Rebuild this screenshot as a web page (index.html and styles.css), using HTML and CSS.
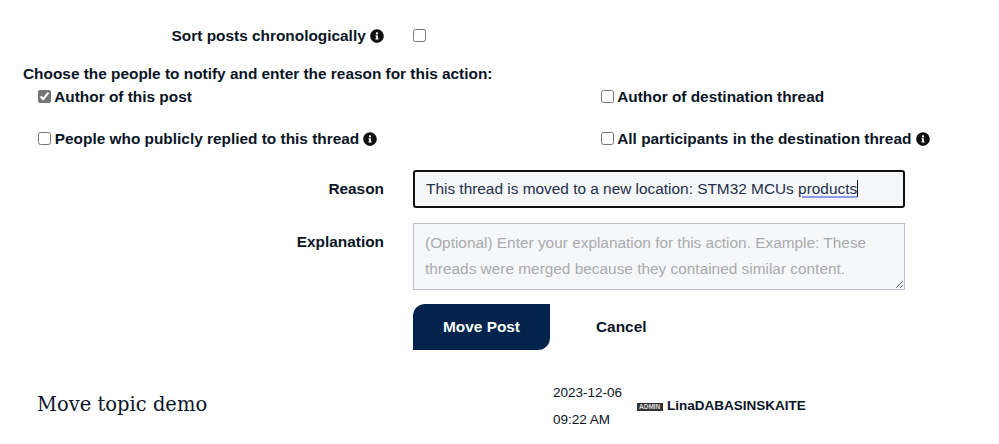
FILE: index.html
```html
<!DOCTYPE html>
<html lang="en">
<head>
  <meta charset="UTF-8">
  <title>Move Post</title>
  <link rel="stylesheet" href="styles.css">
</head>
<body>
  <form class="move-form">
    <div class="form-row sort-row">
      <label class="row-label" for="sort">Sort posts chronologically
        <svg class="info" viewBox="0 0 512 512"><path d="M256 8C119 8 8 119 8 256s111 248 248 248 248-111 248-248S393 8 256 8zm0 110c23 0 42 19 42 42s-19 42-42 42-42-19-42-42 19-42 42-42zm56 254c0 7-5 12-12 12h-88c-7 0-12-5-12-12v-24c0-7 5-12 12-12h12v-64h-12c-7 0-12-5-12-12v-24c0-7 5-12 12-12h64c7 0 12 5 12 12v100h12c7 0 12 5 12 12v24z"/></svg>
      </label>
      <div class="row-field"><input type="checkbox" id="sort"></div>
    </div>

    <p class="notify-title">Choose the people to notify and enter the reason for this action:</p>
    <div class="notify-grid">
      <label class="notify-item"><input type="checkbox" checked> Author of this post</label>
      <label class="notify-item"><input type="checkbox"> Author of destination thread</label>
      <label class="notify-item"><input type="checkbox"> People who publicly replied to this thread
        <svg class="info" viewBox="0 0 512 512"><path d="M256 8C119 8 8 119 8 256s111 248 248 248 248-111 248-248S393 8 256 8zm0 110c23 0 42 19 42 42s-19 42-42 42-42-19-42-42 19-42 42-42zm56 254c0 7-5 12-12 12h-88c-7 0-12-5-12-12v-24c0-7 5-12 12-12h12v-64h-12c-7 0-12-5-12-12v-24c0-7 5-12 12-12h64c7 0 12 5 12 12v100h12c7 0 12 5 12 12v24z"/></svg>
      </label>
      <label class="notify-item"><input type="checkbox"> All participants in the destination thread
        <svg class="info" viewBox="0 0 512 512"><path d="M256 8C119 8 8 119 8 256s111 248 248 248 248-111 248-248S393 8 256 8zm0 110c23 0 42 19 42 42s-19 42-42 42-42-19-42-42 19-42 42-42zm56 254c0 7-5 12-12 12h-88c-7 0-12-5-12-12v-24c0-7 5-12 12-12h12v-64h-12c-7 0-12-5-12-12v-24c0-7 5-12 12-12h64c7 0 12 5 12 12v100h12c7 0 12 5 12 12v24z"/></svg>
      </label>
    </div>

    <div class="form-row reason-row">
      <div class="row-label">Reason</div>
      <div class="row-field">
        <div class="reason-input">This thread is moved to a new location: STM32 MCUs <span class="misspelt">products</span></div>
      </div>
    </div>

    <div class="form-row explain-row">
      <label class="row-label" for="explanation">Explanation</label>
      <div class="row-field">
        <textarea id="explanation" class="explain-input" placeholder="(Optional) Enter your explanation for this action. Example: These threads were merged because they contained similar content."></textarea>
      </div>
    </div>

    <div class="form-row button-row">
      <div class="row-label"></div>
      <div class="row-field buttons">
        <button type="button" class="btn-primary">Move Post</button>
        <button type="button" class="btn-cancel">Cancel</button>
      </div>
    </div>
  </form>

  <div class="post-row">
    <h2 class="post-title">Move topic demo</h2>
    <div class="post-date">
      <div>2023-12-06</div>
      <div>09:22 AM</div>
    </div>
    <div class="post-author"><span class="admin-badge">ADMIN</span> LinaDABASINSKAITE</div>
  </div>
</body>
</html>
```

FILE: styles.css
```css
body {
  margin: 0;
  height: 444px;
  overflow: hidden;
  background: #fff;
  color: #0a1526;
  font-family: "Liberation Sans", Arial, sans-serif;
  font-size: 15.4px;
}

.move-form {
  padding-top: 26px;
}

.form-row {
  display: flex;
}

.row-label {
  width: 384px;
  flex: none;
  text-align: right;
  font-weight: bold;
  line-height: 20px;
}

.row-field {
  margin-left: 29px;
  flex: none;
}

.sort-row input {
  display: block;
  margin: 3px 0 0;
}

.info {
  width: 14px;
  height: 14px;
  vertical-align: -2px;
  fill: #111;
}

.notify-title {
  margin: 19px 0 0 23px;
  font-weight: bold;
  line-height: 18px;
}

.notify-grid {
  display: grid;
  grid-template-columns: 563px auto;
  margin: 4px 0 0 38px;
  row-gap: 22px;
}

.notify-item {
  font-weight: bold;
  line-height: 20px;
}

.notify-item input {
  margin: 0 -0.5px 0 0;
  vertical-align: -1px;
  accent-color: #767676;
}

.reason-row {
  margin-top: 21px;
}

.reason-row .row-label {
  line-height: 38px;
}

.reason-input {
  width: 492px;
  height: 38px;
  box-sizing: border-box;
  border: 2px solid #111;
  border-radius: 3px;
  background: #f6f7f9;
  padding-left: 11px;
  font-size: 15.4px;
  line-height: 34px;
  color: #22304a;
}

.misspelt {
  border-right: 1px solid #111;
  text-decoration: underline solid #8c9ae8 2px;
  text-underline-offset: 2px;
}

.explain-row {
  margin-top: 15px;
}

.explain-row .row-label {
  line-height: 38px;
}

.explain-input {
  display: block;
  width: 492px;
  height: 67px;
  box-sizing: border-box;
  border: 1px solid #bcc0c8;
  background: #f6f7f9;
  padding: 6px 11px;
  margin: 0;
  font-family: "Liberation Sans", Arial, sans-serif;
  font-size: 15.4px;
  line-height: 26px;
}

.explain-input::placeholder {
  color: #a9abaf;
}

.button-row {
  margin-top: 14px;
}

.buttons {
  display: flex;
  align-items: center;
}

.btn-primary {
  width: 137px;
  height: 46px;
  border: none;
  border-radius: 12px 0 12px 0;
  background: #02234b;
  color: #fff;
  font-family: inherit;
  font-size: 15.4px;
  font-weight: bold;
}

.btn-cancel {
  margin-left: 46px;
  padding: 0;
  border: none;
  background: none;
  color: inherit;
  font-family: inherit;
  font-size: 15.4px;
  font-weight: bold;
}

.post-row {
  display: flex;
  margin-top: 29px;
  align-items: center;
}

.post-title {
  margin: 0 0 4px 37px;
  width: 516px;
  font-family: "DejaVu Serif", serif;
  font-size: 19.5px;
  font-weight: normal;
}

.post-date {
  width: 84px;
  font-size: 13.5px;
  line-height: 27px;
}

.post-author {
  margin-bottom: 2px;
  font-size: 13.5px;
  font-weight: bold;
}

.admin-badge {
  display: inline-block;
  background: #333;
  color: #ddd;
  font-size: 6.5px;
  line-height: 8px;
  padding: 0 3px 0 2px;
  vertical-align: 1px;
}
```
